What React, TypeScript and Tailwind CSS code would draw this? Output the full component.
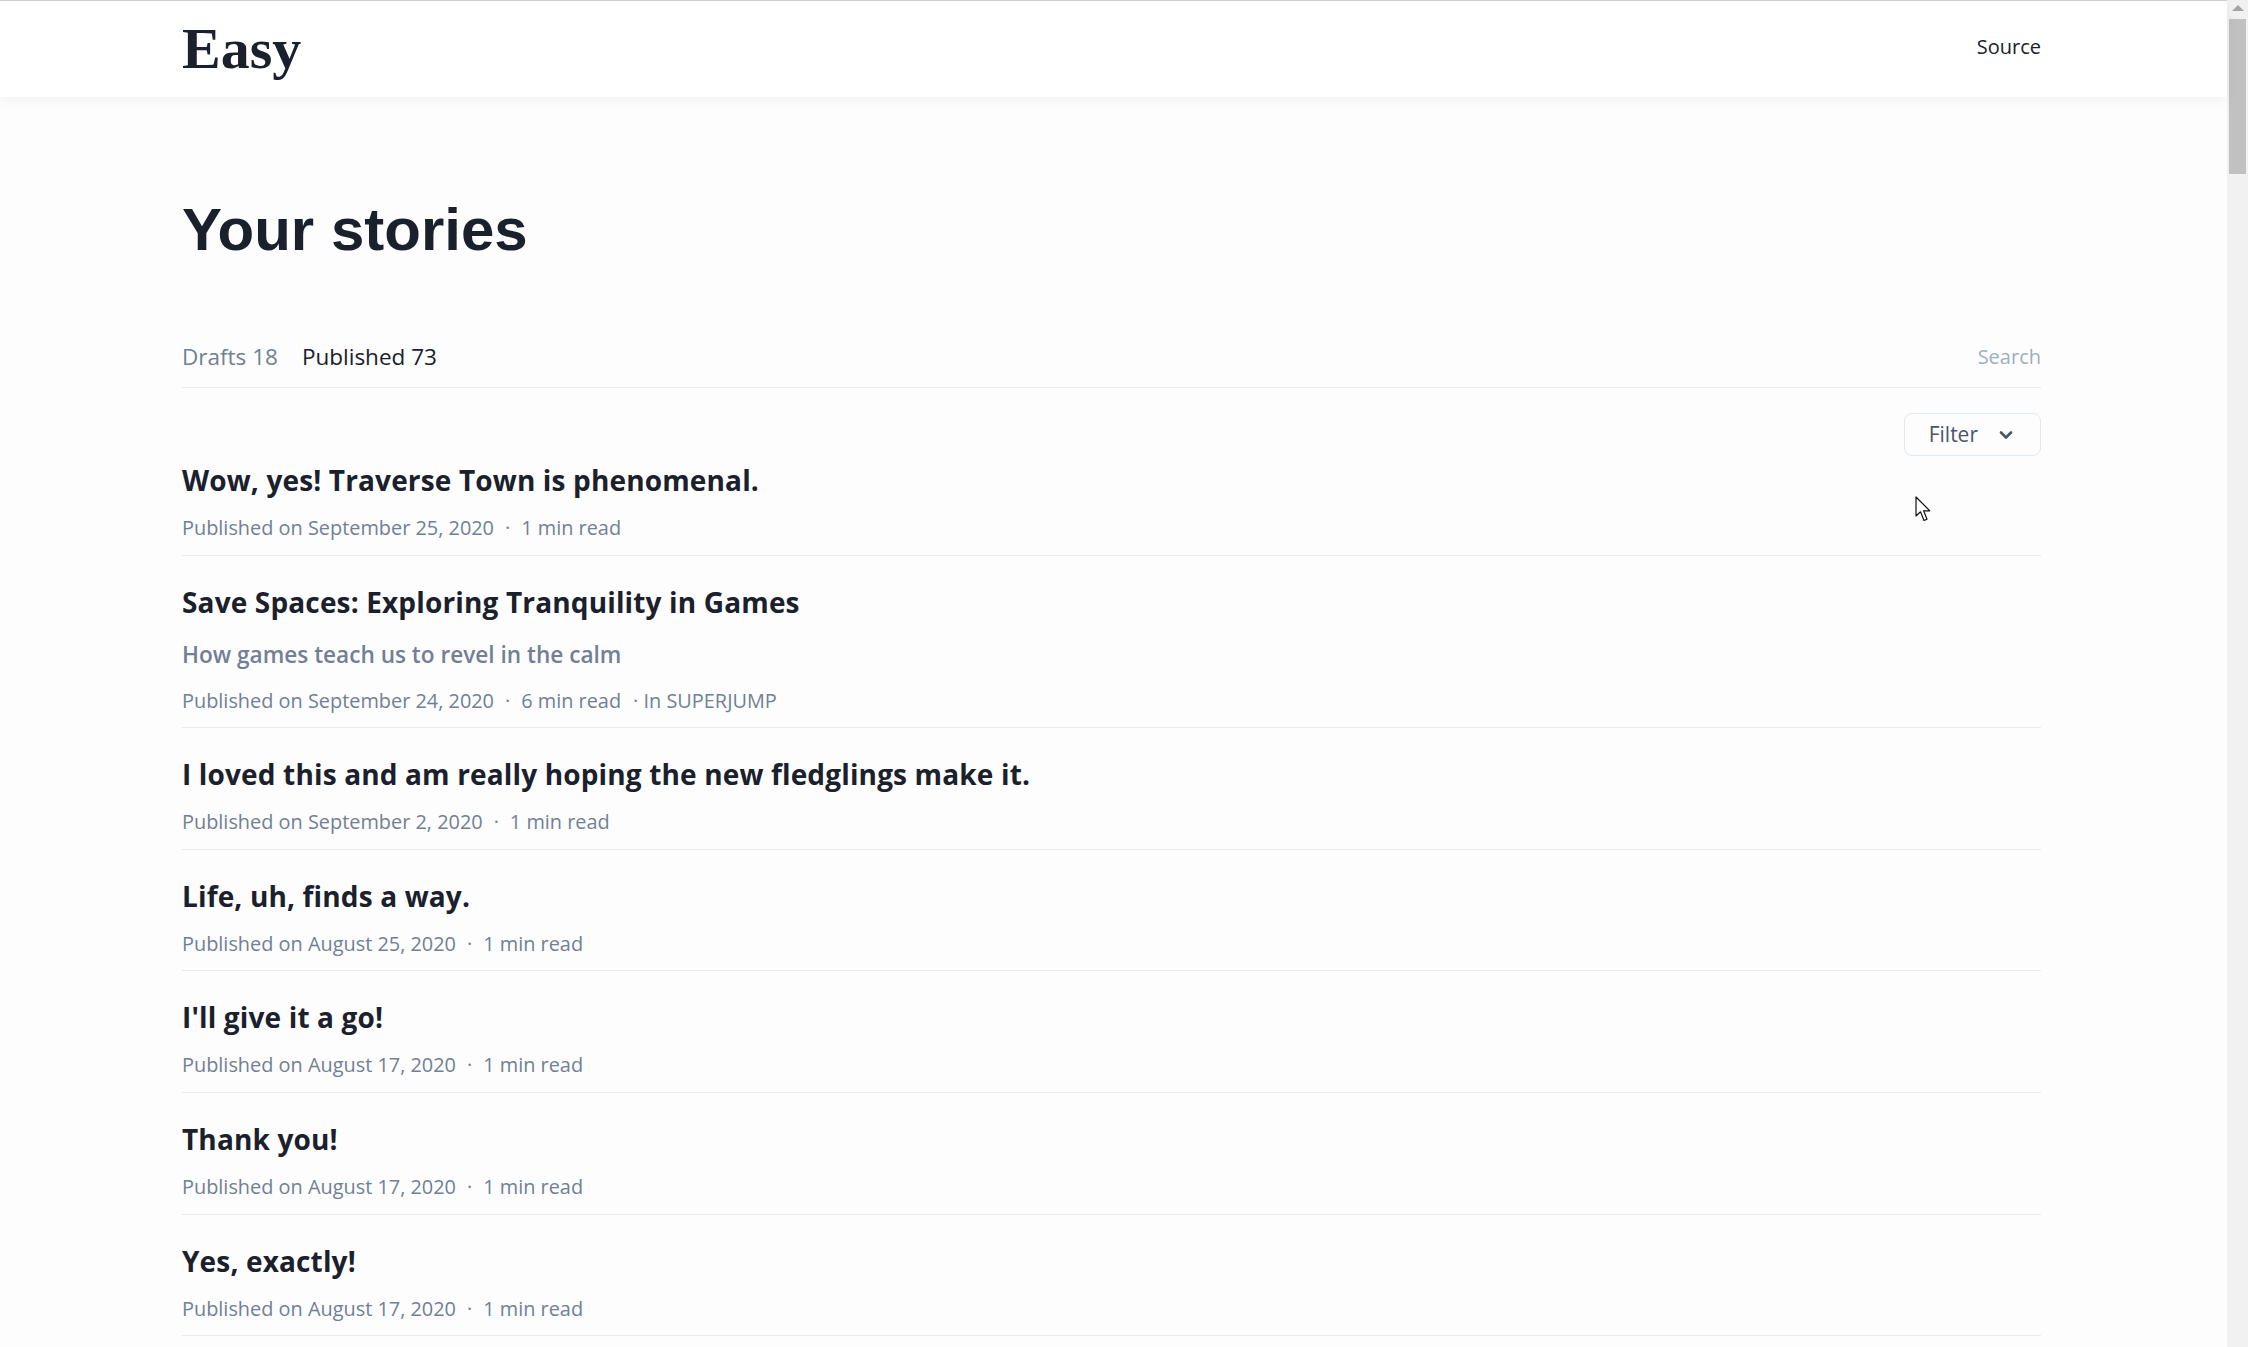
import { ChevronDown } from 'lucide-react';

interface Story {
  title: string;
  subtitle?: string;
  date: string;
  read: string;
  publication?: string;
}

const stories: Story[] = [
  { title: 'Wow, yes! Traverse Town is phenomenal.', date: 'September 25, 2020', read: '1 min read' },
  {
    title: 'Save Spaces: Exploring Tranquility in Games',
    subtitle: 'How games teach us to revel in the calm',
    date: 'September 24, 2020',
    read: '6 min read',
    publication: 'SUPERJUMP',
  },
  { title: 'I loved this and am really hoping the new fledglings make it.', date: 'September 2, 2020', read: '1 min read' },
  { title: 'Life, uh, finds a way.', date: 'August 25, 2020', read: '1 min read' },
  { title: "I'll give it a go!", date: 'August 17, 2020', read: '1 min read' },
  { title: 'Thank you!', date: 'August 17, 2020', read: '1 min read' },
  { title: 'Yes, exactly!', date: 'August 17, 2020', read: '1 min read' },
  { title: 'Great read, thanks for sharing.', date: 'August 12, 2020', read: '1 min read' },
];

const sans = "font-['Open_Sans',sans-serif]";

function StoryRow({ story }: { story: Story }) {
  return (
    <li className="border-b border-[#e8eaed] pt-[28px] pb-[12.6px]">
      <h2 className="text-[28px] leading-[36px] font-bold tracking-[0.15px] text-[#1a202c]">{story.title}</h2>
      {story.subtitle && (
        <p className="mt-[19px] text-[22.6px] leading-[32px] font-semibold text-[#718096]">{story.subtitle}</p>
      )}
      <p className="mt-4 text-[19.9px] leading-[28px] text-[#718096]">
        Published on {story.date}
        <span className="mx-[11px]">·</span>
        {story.read}
        {story.publication && <span className="ml-[12px]">· In {story.publication}</span>}
      </p>
    </li>
  );
}

export default function App() {
  return (
    <div className={`flex h-screen overflow-hidden bg-[#fdfdfd] ${sans}`}>
      <div className="relative flex-1 min-w-0">
        <header className="relative z-10 h-[97px] border-t border-[#cfcfcf] bg-white shadow-[0_3px_12px_rgba(0,0,0,0.05)]">
          <div className="flex h-full items-center justify-between pl-[182px] pr-[186px]">
            <span className="font-['Liberation_Serif',serif] text-[58px] leading-none font-bold text-[#1a202c]">Easy</span>
            <a className="-mt-[4px] text-[20px] text-[#1a202c]">Source</a>
          </div>
        </header>

        <main className="pl-[182px] pr-[186px] pt-[103px]">
          <h1 className="font-['Liberation_Sans',Arial,sans-serif] text-[60px] leading-none font-bold text-[#1a202c]">
            Your stories
          </h1>

          <div className="mt-[81px] flex items-center justify-between border-b border-[#e8eaed] pb-[14px]">
            <div className="flex items-center gap-[24px] text-[22.5px] leading-[32px]">
              <span className="text-[#718096]">Drafts 18</span>
              <span className="text-[#1a202c]">Published 73</span>
            </div>
            <span className="text-[20px] text-[#a0aec0]">Search</span>
          </div>

          <div className="flex justify-end pt-[25px]">
            <button className="flex h-[43px] items-center gap-[18px] rounded-[8px] border border-[#e2e8f0] pl-[24px] pr-[24px] text-[21px] text-[#4a5568]">
              Filter
              <ChevronDown className="h-[20px] w-[20px]" strokeWidth={3.2} />
            </button>
          </div>

          <ul className="-mt-[22px]">
            {stories.map((s) => (
              <StoryRow key={s.title} story={s} />
            ))}
          </ul>
        </main>

        {/* mouse pointer caught in the screenshot */}
        <svg className="absolute left-[1915px] top-[496px]" width="19" height="27" viewBox="0 0 19 27">
          <path d="M1 1 L1 20 L5.5 15.8 L9 24.5 L12 23.2 L8.6 14.8 L14.8 14.8 Z" fill="white" stroke="#111" strokeWidth="1.2" strokeLinejoin="round" />
        </svg>
      </div>

      <div className="flex w-[21px] flex-col items-center bg-[#f1f1f1]">
        <div className="mt-[5px] h-0 w-0 border-x-[6px] border-b-[6px] border-x-transparent border-b-[#a3a3a3]" />
        <div className="mt-[8px] h-[155px] w-[17px] bg-[#c1c1c1]" />
      </div>
    </div>
  );
}
